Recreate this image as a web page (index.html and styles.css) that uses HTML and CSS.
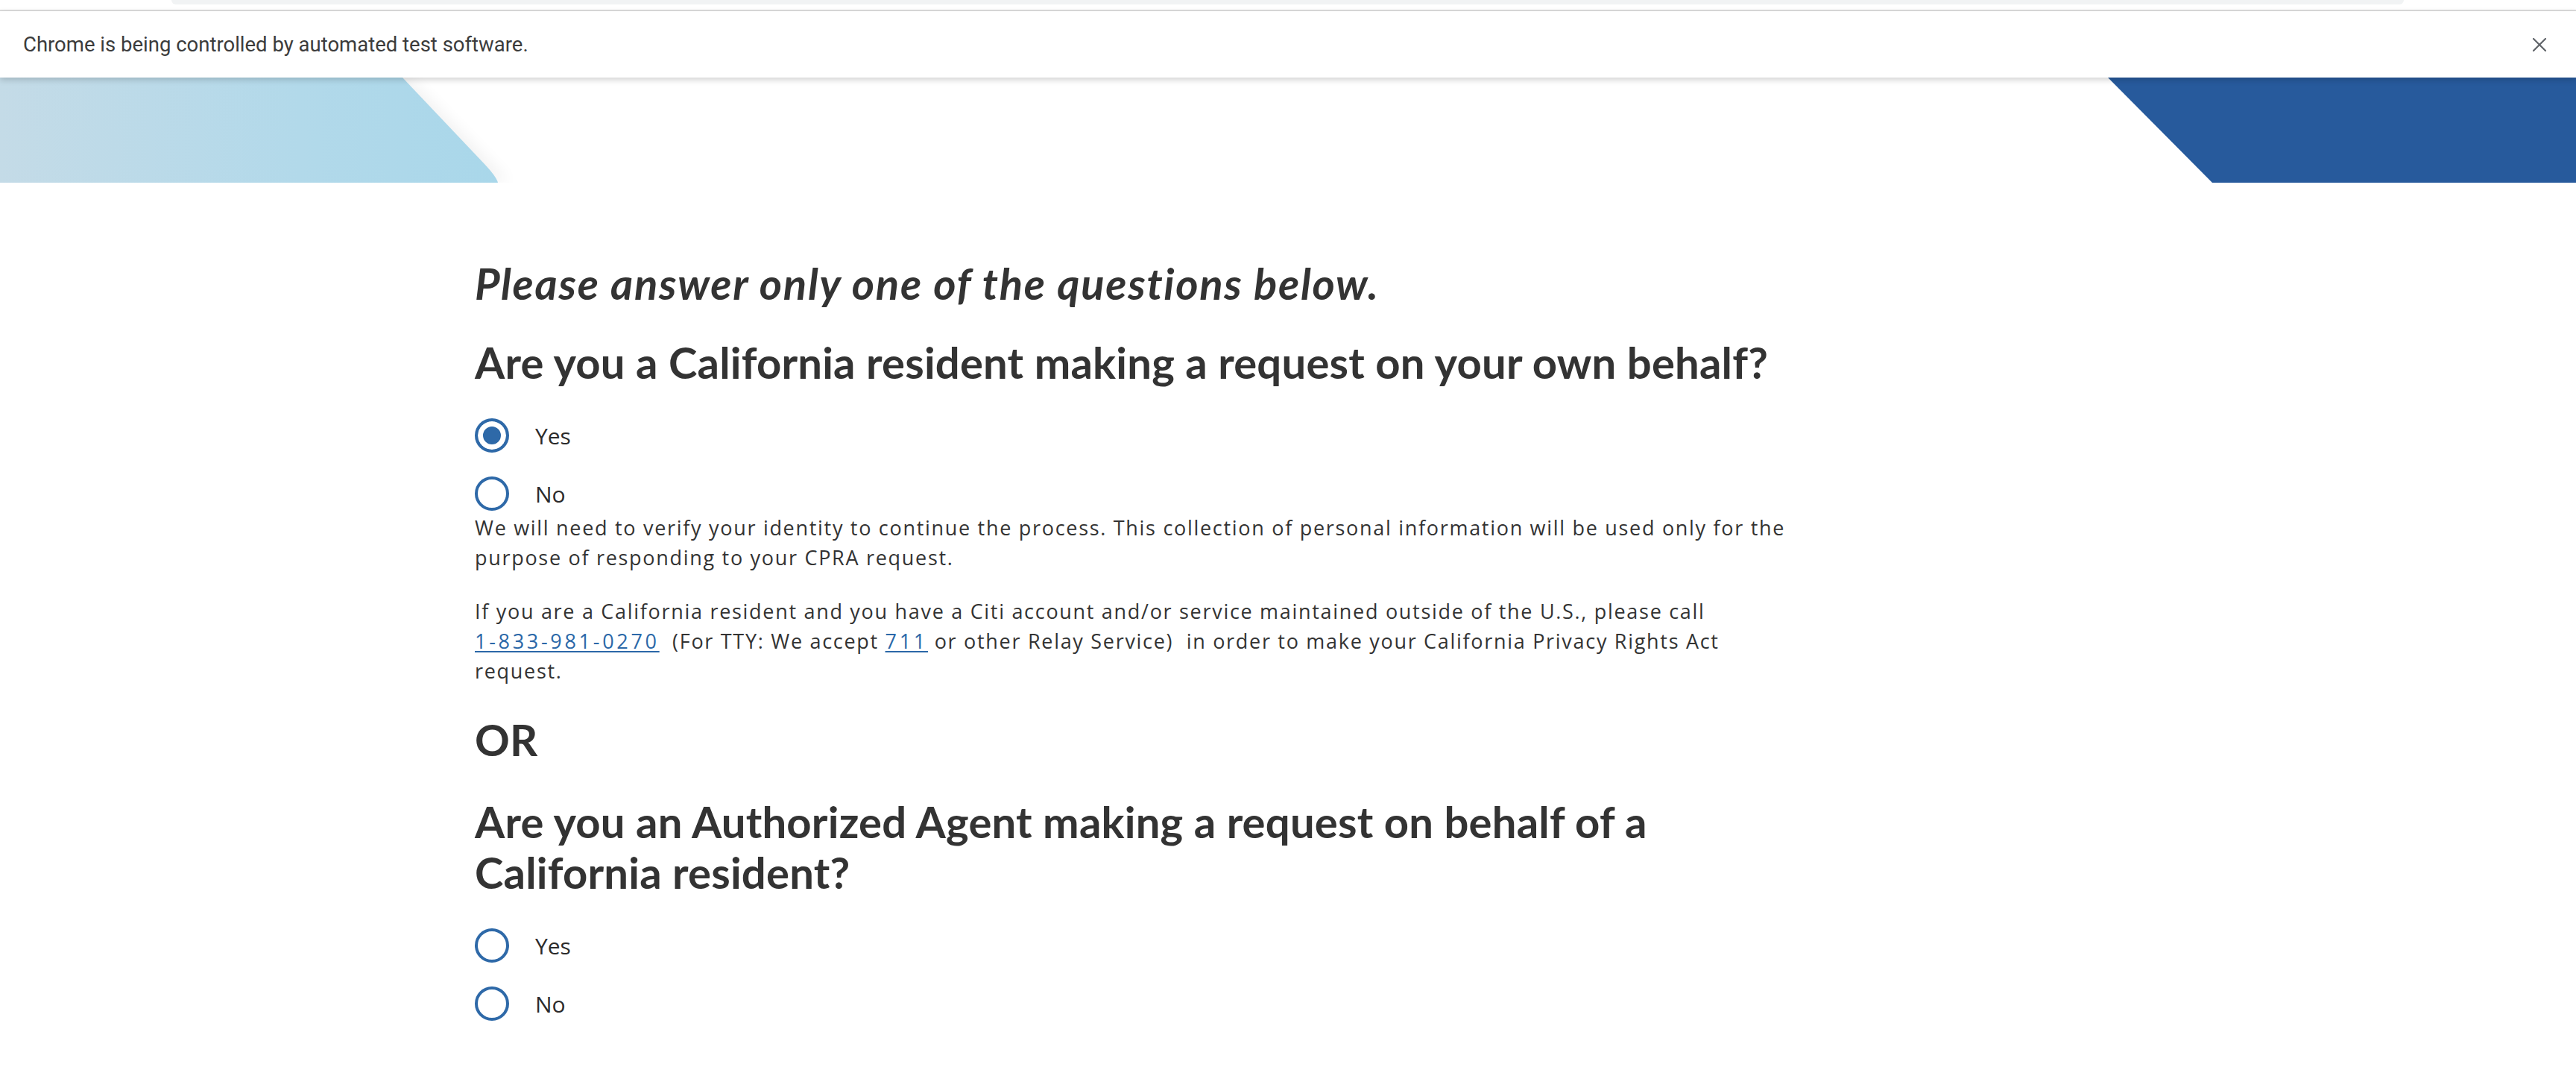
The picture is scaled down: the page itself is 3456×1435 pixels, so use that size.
FILE: index.html
```html
<!DOCTYPE html>
<html lang="en">
<head>
<meta charset="utf-8">
<title>California Privacy Rights Act Request</title>
<link rel="stylesheet" href="styles.css">
</head>
<body>
<div class="chrome-top"><div class="chrome-tab"></div></div>
<div class="infobar">
  <span class="infobar-text">Chrome is being controlled by automated test software.</span>
  <svg class="infobar-close" width="20" height="20" viewBox="0 0 20 20" aria-label="Close">
    <path d="M2 2 L18 18 M18 2 L2 18" stroke="#5f6368" stroke-width="2.2" stroke-linecap="round" fill="none"/>
  </svg>
</div>
<header class="banner">
  <svg class="banner-left" width="700" height="141" viewBox="0 0 700 141">
    <defs>
      <linearGradient id="lb" x1="0" y1="0" x2="1" y2="0">
        <stop offset="0" stop-color="#c4dbe7"/>
        <stop offset="0.6" stop-color="#b2d9ea"/>
        <stop offset="1" stop-color="#a9d7ea"/>
      </linearGradient>
      <filter id="sh" x="-10%" y="-10%" width="130%" height="130%">
        <feGaussianBlur stdDeviation="10"/>
      </filter>
    </defs>
    <path d="M0 0 H548 L664 120 Q680 136 682 141 H0 Z" fill="#000" opacity="0.05" filter="url(#sh)"/>
    <path d="M0 0 H540 L650 116 Q666 133 668 141 H0 Z" fill="url(#lb)"/>
  </svg>
  <svg class="banner-right" width="628" height="141" viewBox="0 0 628 141">
    <path d="M0 0 H628 V141 H140 Z" fill="#275a9c"/>
  </svg>
</header>
<main class="page">
  <div class="content">
    <h2 class="intro">Please answer only one of the questions below.</h2>

    <h2 class="question">Are you a California resident making a request on your own behalf?</h2>
    <div class="options">
      <label class="option"><input type="radio" name="self" checked><span>Yes</span></label>
      <label class="option"><input type="radio" name="self"><span>No</span></label>
    </div>
    <p class="note first">We will need to verify your identity to continue the process. This collection of personal information will be used only for the<br>purpose of responding to your CPRA request.</p>
    <p class="note">If you are a California resident and you have a Citi account and/or service maintained outside of the U.S., please call<br><a href="#">1-833-981-0270</a>&nbsp; (For TTY: We accept <a href="#">711</a> or other Relay Service)&nbsp; in order to make your California Privacy Rights Act<br>request.</p>

    <h2 class="question or">OR</h2>

    <h2 class="question agent">Are you an Authorized Agent making a request on behalf of a<br>California resident?</h2>
    <div class="options">
      <label class="option"><input type="radio" name="agent"><span>Yes</span></label>
      <label class="option"><input type="radio" name="agent"><span>No</span></label>
    </div>
  </div>
</main>
</body>
</html>
```

FILE: styles.css
```css
html, body {
  margin: 0;
  padding: 0;
  background: #ffffff;
}

body {
  font-family: "Open Sans", "Noto Sans", sans-serif;
  color: #333333;
  width: 3456px;
  min-height: 1435px;
  overflow: hidden;
}

/* Browser chrome strip */
.chrome-top {
  height: 13px;
  border-bottom: 2px solid #dcdcdc;
  display: flex;
  padding-left: 230px;
}

.chrome-tab {
  width: 2995px;
  height: 6px;
  background: #f1f3f4;
  border-radius: 0 0 16px 16px;
}

.infobar {
  height: 89px;
  display: flex;
  align-items: center;
  justify-content: space-between;
  padding: 0 39px 0 31px;
  background: #ffffff;
  box-shadow: 0 3px 8px rgba(0, 0, 0, 0.18);
  position: relative;
  z-index: 2;
}

.infobar-text {
  font-family: Roboto, "Liberation Sans", sans-serif;
  font-size: 27.5px;
  color: #3c3c3c;
}

.infobar-close {
  display: block;
}

/* Banner */
.banner {
  height: 141px;
  display: flex;
  justify-content: space-between;
  position: relative;
  z-index: 1;
}

.banner svg {
  display: block;
}

/* Content */
.page {
  padding: 0 0 60px 637px;
}

.content {
  width: 1860px;
}

h2 {
  margin: 0;
  font-family: Lato, "Open Sans", sans-serif;
  font-weight: 700;
  font-size: 58px;
  line-height: 68px;
  letter-spacing: 0.2px;
  color: #333333;
}

.intro {
  font-style: italic;
  letter-spacing: 1.7px;
  margin-top: 101px;
}

.question {
  margin-top: 38px;
}

.question.or {
  margin-top: 38px;
}

.question.agent {
  margin-top: 42px;
}

.options {
  margin-top: 41px;
  display: flex;
  flex-direction: column;
  gap: 32px;
}

.option {
  display: flex;
  align-items: center;
  gap: 35px;
  font-family: "Open Sans", sans-serif;
  font-size: 30px;
  color: #2b2b2b;
  height: 46px;
}

.option input {
  appearance: none;
  -webkit-appearance: none;
  margin: 0;
  width: 46px;
  height: 46px;
  border: 4.5px solid #2e69a8;
  border-radius: 50%;
  background: #ffffff;
  box-sizing: border-box;
  flex: none;
}

.option input:checked {
  background: #2e69a8;
  box-shadow: inset 0 0 0 7px #ffffff;
}

.note {
  margin: 32px 0 0;
  font-size: 27px;
  letter-spacing: 1.7px;
  line-height: 40px;
  color: #333333;
}

.note.first {
  margin-top: 3px;
}

.note a {
  color: #2b68a8;
  letter-spacing: 3.7px;
  text-decoration: underline;
  text-decoration-thickness: 2px;
  text-underline-offset: 3px;
}
```
